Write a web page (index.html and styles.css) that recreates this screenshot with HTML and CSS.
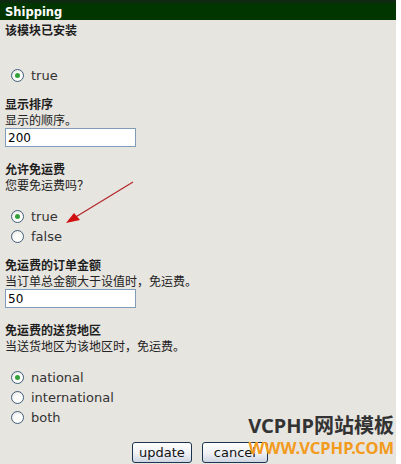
FILE: index.html
```html
<!DOCTYPE html>
<html lang="zh-CN">
<head>
    <meta charset="UTF-8">
    <meta name="viewport" content="width=device-width, initial-scale=1.0">
    <title>Shipping</title>
    <link rel="stylesheet" href="styles.css">
</head>
<body>
    <div class="panel">
        <div class="panel-title">Shipping</div>

        <div class="field first">
            <div class="field-title">该模块已安装</div>
            <div class="field-desc"></div>
            <div class="options spaced">
                <label class="option"><span class="radio checked"></span>true</label>
            </div>
        </div>

        <div class="field">
            <div class="field-title">显示排序</div>
            <div class="field-desc">显示的顺序。</div>
            <input class="text-input" type="text" value="200">
        </div>

        <div class="field wide">
            <div class="field-title">允许免运费</div>
            <div class="field-desc">您要免运费吗？</div>
            <div class="options">
                <label class="option"><span class="radio checked"></span>true</label>
                <label class="option"><span class="radio"></span>false</label>
            </div>
        </div>

        <div class="field">
            <div class="field-title">免运费的订单金额</div>
            <div class="field-desc">当订单总金额大于设值时，免运费。</div>
            <input class="text-input" type="text" value="50">
        </div>

        <div class="field wide">
            <div class="field-title">免运费的送货地区</div>
            <div class="field-desc">当送货地区为该地区时，免运费。</div>
            <div class="options">
                <label class="option"><span class="radio checked"></span>national</label>
                <label class="option"><span class="radio"></span>international</label>
                <label class="option"><span class="radio"></span>both</label>
            </div>
        </div>

        <div class="actions">
            <button class="btn">update</button>
            <button class="btn btn-cancel">cancel</button>
        </div>

        <!-- annotation arrow drawn over the form -->
        <svg class="arrow" width="80" height="50" viewBox="0 0 80 50">
            <line x1="73" y1="2" x2="14" y2="38" stroke="#b3262a" stroke-width="1.2"/>
            <polygon points="6,43 14,33 20,40" fill="#d01010"/>
        </svg>

        <div class="watermark">
            <div class="wm-name">VCPHP网站模板</div>
            <div class="wm-url">WWW.VCPHP.COM</div>
        </div>
    </div>
</body>
</html>
```

FILE: styles.css
```css
body {
    margin: 0;
    background: #fff;
    font-family: "DejaVu Sans", "Noto Sans CJK SC", sans-serif;
    color: #222;
}

.panel {
    position: relative;
    width: 396px;
    height: 464px;
    background: #e7e5e0;
    overflow: hidden;
}

.panel-title {
    height: 17px;
    line-height: 18px;
    border-top: 3px solid #0e2a10;
    background: #013601;
    color: #fff;
    font-size: 11.5px;
    font-weight: bold;
    padding-left: 5px;
}

.field {
    padding: 11px 5px 0;
}

.field.first {
    padding-top: 2px;
}

.field.wide {
    padding-top: 14px;
}

.field-title {
    font-family: "Noto Sans CJK SC", sans-serif;
    font-size: 12px;
    font-weight: bold;
    line-height: 16px;
    height: 16px;
    color: #1e1e1e;
}

.field-desc {
    font-family: "Noto Sans CJK SC", sans-serif;
    font-size: 12px;
    line-height: 16px;
    height: 16px;
    color: #222;
}

.options {
    margin-top: 13px;
}

.options.spaced {
    margin-top: 11px;
}

.option {
    display: flex;
    align-items: center;
    height: 20px;
    font-size: 13px;
    color: #333;
}

.radio {
    box-sizing: border-box;
    width: 13px;
    height: 13px;
    margin: 0 7px 0 6px;
    border: 1px solid #3f5f7c;
    border-radius: 50%;
    background: radial-gradient(circle at 60% 65%, #fdfdfb 40%, #dcdcd6 100%);
    display: flex;
    align-items: center;
    justify-content: center;
}

.radio.checked::after {
    content: "";
    width: 5px;
    height: 5px;
    border-radius: 50%;
    background: #33a03a;
}

.text-input {
    display: block;
    box-sizing: border-box;
    width: 131px;
    height: 19px;
    margin: 0;
    padding: 0 2px;
    border: 1px solid #7f9db9;
    background: #fff;
    font-family: "DejaVu Sans", sans-serif;
    font-size: 12px;
    color: #000;
}

.actions {
    display: flex;
    justify-content: center;
    gap: 10px;
    margin-top: 15px;
    padding-left: 4px;
}

.btn {
    height: 21px;
    padding: 0 6px;
    border: 1px solid #1c3550;
    border-radius: 3px;
    background: linear-gradient(#ffffff, #eef0f4 55%, #cfd6e2);
    font-family: "DejaVu Sans", sans-serif;
    font-size: 13px;
    color: #111;
    line-height: 19px;
}

.btn-cancel {
    padding: 0 11px;
}

.arrow {
    position: absolute;
    left: 60px;
    top: 180px;
}

.watermark {
    position: absolute;
    right: 2px;
    top: 412px;
    text-align: right;
    font-weight: bold;
    font-family: "Noto Sans", "Noto Sans CJK SC", sans-serif;
}

.wm-name {
    font-size: 20px;
    line-height: 27px;
    color: #333;
}

.wm-url {
    font-size: 16.5px;
    line-height: 18px;
    color: #f29b1d;
}
```
